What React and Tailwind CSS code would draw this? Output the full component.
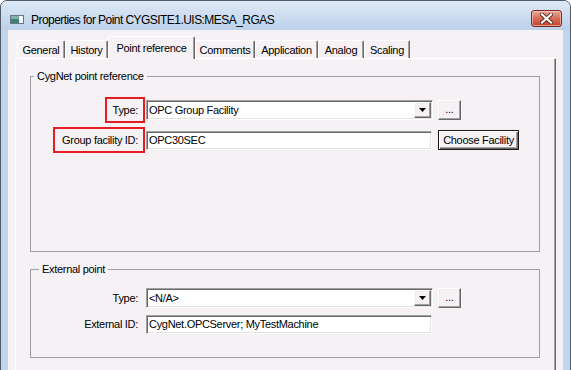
import React from "react";

const sunken =
  "bg-white border border-[#a0a0a0] border-r-white border-b-white shadow-[inset_1px_1px_0_#696969,inset_-1px_-1px_0_#e3e3e3]";
const raised =
  "bg-[#f5f1f5] border border-white border-r-[#696969] border-b-[#696969] shadow-[inset_-1px_-1px_0_#a0a0a0,inset_1px_1px_0_#ececec]";

function Combo({ value }) {
  return (
    <div className={`${sunken} w-[287px] h-[20px] flex p-[1px]`}>
      <div className="flex-1 flex items-center pl-[1px] leading-none">{value}</div>
      <div className={`${raised} w-[17px] h-[16px] flex items-center justify-center`}>
        <svg width="7" height="4" viewBox="0 0 7 4">
          <path d="M0 0h7L3.5 4z" fill="#000" />
        </svg>
      </div>
    </div>
  );
}

function TextBox({ value }) {
  return (
    <div className={`${sunken} w-[286px] h-[19px] flex items-center pl-[2px] leading-none`}>
      {value}
    </div>
  );
}

function Dots() {
  return (
    <div className={`${raised} ml-[5px] w-[23px] h-[20px] flex items-end justify-center pb-[4px] leading-none`}>
      ...
    </div>
  );
}

function Tab({ label, w, selected }) {
  if (selected) {
    return (
      <div
        className={`${w} h-[23px] -mb-[1px] relative z-10 bg-[#f5f1f5] border-t border-l border-white border-r border-r-[#696969] shadow-[inset_-1px_0_0_#a0a0a0] rounded-t-[2px] flex items-start justify-center pt-[3px]`}
      >
        {label}
      </div>
    );
  }
  return (
    <div
      className={`${w} h-[18px] bg-[#f5f1f5] border-t border-l border-white border-r border-r-[#696969] shadow-[inset_-1px_0_0_#a0a0a0] rounded-t-[2px] flex items-center justify-center pt-[1px]`}
    >
      {label}
    </div>
  );
}

export default function App() {
  return (
    <div className="w-[571px] h-[370px] overflow-hidden bg-white font-['Liberation_Sans',Arial,sans-serif] text-[11px] tracking-[-0.3px] text-black">
      <div className="w-[571px] h-[400px] flex flex-col border border-[#4f5b68] rounded-t-[7px] bg-[#c0d5ee]">
        {/* Title bar */}
        <div className="h-[29px] flex items-start bg-gradient-to-b from-[#dfe9f5] to-[#bcd1ea] rounded-t-[6px] shrink-0">
          <div className="flex items-center pl-[9px] pt-[12px]">
            <svg width="14" height="9" viewBox="0 0 14 9" className="shrink-0">
              <rect x="0.5" y="0.5" width="13" height="8" fill="#eef2f5" stroke="#6a7785" />
              <rect x="1" y="1" width="8" height="7" fill="#3f7f74" />
              <rect x="1" y="1" width="8" height="3" fill="#7fb2a6" />
              <rect x="10" y="1" width="2" height="4" fill="#ffffff" />
            </svg>
            <span className="ml-[7px] text-[12px] tracking-[-0.55px] leading-[12px] mt-[1px]">
              Properties for Point CYGSITE1.UIS:MESA_RGAS
            </span>
          </div>
          <div className="ml-auto mr-[8px] mt-[9px] w-[31px] h-[17px] rounded-[3px] border border-[#7b2a20] bg-gradient-to-b from-[#e9a99c] via-[#d66c57] to-[#c2412a] shadow-[inset_0_0_0_1px_rgba(255,210,200,0.6)] flex items-center justify-center">
            <svg width="13" height="11" viewBox="0 0 13 11">
              <path d="M2 1.5L11 9.5M11 1.5L2 9.5" stroke="#5a2a22" strokeWidth="4" strokeLinecap="square" />
              <path d="M2 1.5L11 9.5M11 1.5L2 9.5" stroke="#ffffff" strokeWidth="2.2" strokeLinecap="square" />
            </svg>
          </div>
        </div>

        {/* Body */}
        <div className="flex-1 flex px-[7px]">
          <div className="flex-1 bg-[#f5f1f5] flex flex-col pt-[6px] px-[7px]">
            {/* Tabs */}
            <div className="flex items-end pl-[2px] h-[22px] relative z-10">
              <Tab label="General" w="w-[48px]" />
              <Tab label="History" w="w-[43px]" />
              <Tab label="Point reference" w="w-[87px]" selected />
              <Tab label="Comments" w="w-[60px]" />
              <Tab label="Application" w="w-[63px]" />
              <Tab label="Analog" w="w-[46px]" />
              <Tab label="Scaling" w="w-[46px]" />
            </div>

            {/* Panel */}
            <div className="flex-1 bg-[#f5f1f5] border-t border-l border-white border-r border-r-[#696969] shadow-[inset_-1px_0_0_#a0a0a0] pt-[11px] pl-[14px] pr-[15px]">
              <fieldset className="border border-[#a0a0a0] pt-[14px] pb-[98px]">
                <legend className="ml-[3px] px-[3px] leading-[13px]">CygNet point reference</legend>
                <div className="flex items-center">
                  <div className="w-[115px] flex justify-end">
                    <div className="mr-[1px] h-[26px] border-2 border-[#e41e1e] pl-[6px] pr-[5px] flex items-center">
                      Type:
                    </div>
                  </div>
                  <Combo value="OPC Group Facility" />
                  <Dots />
                </div>
                <div className="flex items-center mt-[4px]">
                  <div className="w-[115px] flex justify-end">
                    <div className="mr-[1px] h-[26px] border-2 border-[#e41e1e] pl-[7px] pr-[5px] flex items-center">
                      Group facility ID:
                    </div>
                  </div>
                  <TextBox value="OPC30SEC" />
                  <div className="ml-[6px] w-[81px] h-[20px] bg-[#f5f1f5] border border-[#1a1a1a] shadow-[inset_1px_1px_0_#ffffff,inset_-1px_-1px_0_#696969,inset_-2px_-2px_0_#a0a0a0] flex items-center justify-center leading-none">
                    Choose Facility
                  </div>
                </div>
              </fieldset>

              <fieldset className="mt-[11px] border border-[#a0a0a0] pt-[9px] pb-[20px]">
                <legend className="ml-[8px] px-[3px] leading-[13px]">External point</legend>
                <div className="flex items-center h-[26px]">
                  <div className="w-[115px] flex justify-end pr-[8px]">Type:</div>
                  <Combo value="<N/A>" />
                  <Dots />
                </div>
                <div className="flex items-center h-[26px]">
                  <div className="w-[115px] flex justify-end pr-[8px]">External ID:</div>
                  <TextBox value="CygNet.OPCServer; MyTestMachine" />
                </div>
              </fieldset>
            </div>
          </div>
        </div>
      </div>
    </div>
  );
}
